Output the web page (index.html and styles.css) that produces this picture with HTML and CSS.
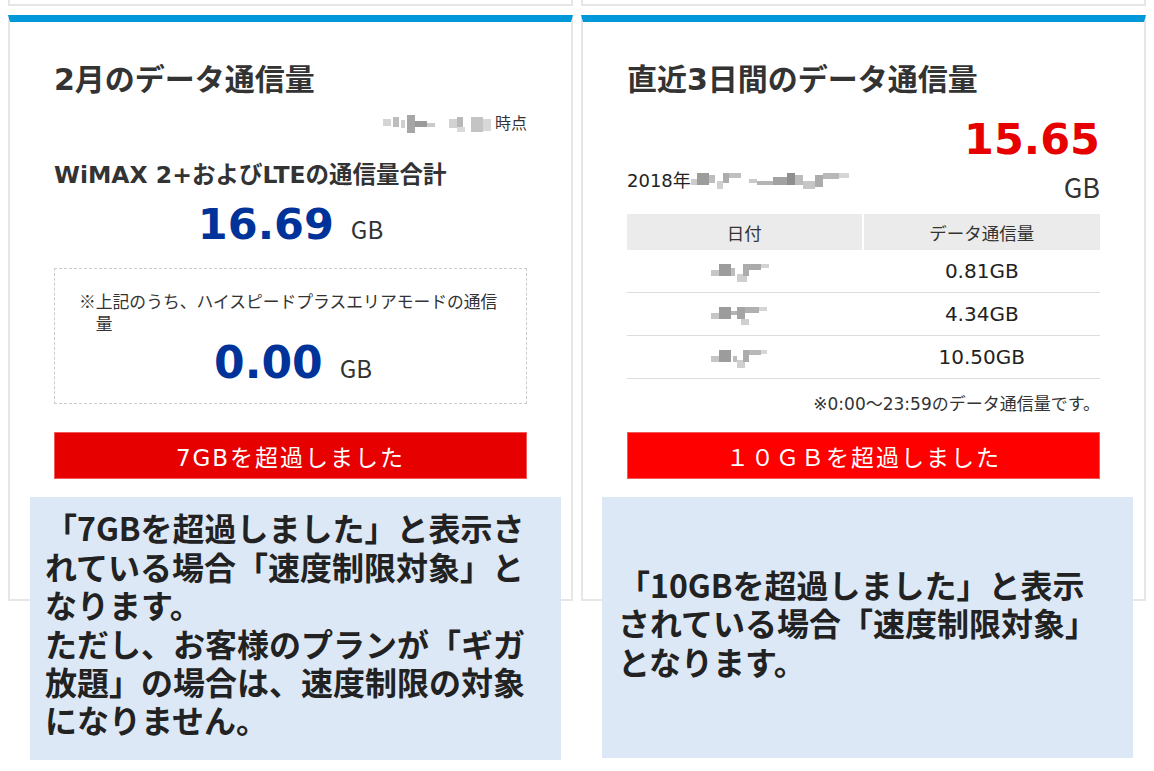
FILE: index.html
```html
<!DOCTYPE html>
<html lang="ja">
<head>
<meta charset="utf-8">
<title>データ通信量</title>
<link rel="stylesheet" href="styles.css">
</head>
<body>
<div class="columns">
  <section class="column">
    <div class="prev-card"></div>
    <div class="card">
      <h2 class="card-title">2月のデータ通信量</h2>
      <p class="as-of"><svg class="mosaic" width="112" height="18" viewBox="0 0 112 18" aria-hidden="true"><rect x="0" y="4" width="8" height="7" fill="#d4d4d4"/><rect x="10" y="2" width="6" height="10" fill="#bdbdbd"/><rect x="18" y="5" width="4" height="8" fill="#cfcfcf"/><rect x="24" y="0" width="8" height="18" fill="#a6a6a6"/><rect x="32" y="6" width="12" height="6" fill="#9a9a9a"/><rect x="44" y="8" width="8" height="4" fill="#cacaca"/><rect x="66" y="4" width="8" height="9" fill="#d2d2d2"/><rect x="74" y="2" width="6" height="10" fill="#b8b8b8"/><rect x="74" y="12" width="8" height="5" fill="#dadada"/><rect x="88" y="2" width="12" height="15" fill="#c4c4c4"/><rect x="100" y="4" width="8" height="12" fill="#d8d8d8"/></svg>時点</p>
      <h3 class="subtitle">WiMAX 2+およびLTEの通信量合計</h3>
      <p class="amount"><span class="num num-blue">16.69</span><span class="unit">GB</span></p>
      <div class="hs-box">
        <p class="hs-note"><span class="mark">※</span><span class="hs-text">上記のうち、ハイスピードプラスエリアモードの通信量</span></p>
        <p class="amount amount-inner"><span class="num num-blue">0.00</span><span class="unit">GB</span></p>
      </div>
      <div class="alert alert-dark">7GBを超過しました</div>
    </div>
    <div class="callout callout-left">
      <p>「7GBを超過しました」と表示されている場合「速度制限対象」となります。<br>ただし、お客様のプランが「ギガ放題」の場合は、速度制限の対象になりません。</p>
    </div>
  </section>

  <section class="column">
    <div class="prev-card"></div>
    <div class="card">
      <h2 class="card-title">直近3日間のデータ通信量</h2>
      <div class="summary">
        <p class="period">2018年<svg class="mosaic" width="170" height="20" viewBox="0 0 170 20" aria-hidden="true"><rect x="0" y="8" width="6" height="6" fill="#cccccc"/><rect x="6" y="2" width="12" height="12" fill="#9c9c9c"/><rect x="18" y="4" width="6" height="8" fill="#bdbdbd"/><rect x="26" y="10" width="6" height="8" fill="#cfcfcf"/><rect x="32" y="2" width="6" height="10" fill="#acacac"/><rect x="38" y="2" width="12" height="5" fill="#c0c0c0"/><rect x="58" y="8" width="8" height="4" fill="#cacaca"/><rect x="66" y="10" width="16" height="4" fill="#b4b4b4"/><rect x="82" y="6" width="14" height="8" fill="#a2a2a2"/><rect x="96" y="2" width="8" height="12" fill="#8e8e8e"/><rect x="104" y="4" width="8" height="10" fill="#bcbcbc"/><rect x="112" y="10" width="12" height="8" fill="#c6c6c6"/><rect x="124" y="4" width="8" height="12" fill="#acacac"/><rect x="132" y="2" width="16" height="6" fill="#b8b8b8"/><rect x="148" y="2" width="10" height="5" fill="#d6d6d6"/></svg></p>
        <div class="total">
          <span class="num num-red">15.65</span>
          <span class="total-unit">GB</span>
        </div>
      </div>
      <table class="usage-table">
        <thead>
          <tr><th>日付</th><th>データ通信量</th></tr>
        </thead>
        <tbody>
          <tr><td><svg class="mosaic" width="68" height="20" viewBox="0 0 68 20" aria-hidden="true"><rect x="0" y="8" width="8" height="6" fill="#c6c6c6"/><rect x="8" y="2" width="12" height="12" fill="#9c9c9c"/><rect x="20" y="6" width="4" height="8" fill="#bdbdbd"/><rect x="26" y="12" width="10" height="8" fill="#cfcfcf"/><rect x="32" y="2" width="6" height="12" fill="#acacac"/><rect x="38" y="2" width="12" height="6" fill="#aaaaaa"/><rect x="50" y="2" width="8" height="4" fill="#d2d2d2"/></svg></td><td>0.81GB</td></tr>
          <tr><td><svg class="mosaic" width="68" height="20" viewBox="0 0 68 20" aria-hidden="true"><rect x="0" y="8" width="8" height="6" fill="#c6c6c6"/><rect x="8" y="2" width="12" height="12" fill="#9c9c9c"/><rect x="20" y="6" width="6" height="4" fill="#b4b4b4"/><rect x="26" y="2" width="8" height="12" fill="#a4a4a4"/><rect x="34" y="2" width="14" height="6" fill="#b0b0b0"/><rect x="30" y="14" width="8" height="6" fill="#cfcfcf"/><rect x="48" y="2" width="8" height="4" fill="#d4d4d4"/></svg></td><td>4.34GB</td></tr>
          <tr><td><svg class="mosaic" width="68" height="20" viewBox="0 0 68 20" aria-hidden="true"><rect x="0" y="8" width="8" height="6" fill="#c6c6c6"/><rect x="8" y="2" width="12" height="12" fill="#9c9c9c"/><rect x="22" y="8" width="4" height="6" fill="#bdbdbd"/><rect x="26" y="12" width="8" height="8" fill="#cfcfcf"/><rect x="32" y="2" width="6" height="12" fill="#acacac"/><rect x="38" y="2" width="12" height="5" fill="#b8b8b8"/><rect x="50" y="2" width="6" height="4" fill="#d6d6d6"/></svg></td><td>10.50GB</td></tr>
        </tbody>
      </table>
      <p class="range-note">※0:00～23:59のデータ通信量です。</p>
      <div class="alert alert-bright">１０ＧＢを超過しました</div>
    </div>
    <div class="callout callout-right">
      <p>「10GBを超過しました」と表示されている場合「速度制限対象」となります。</p>
    </div>
  </section>
</div>
</body>
</html>
```

FILE: styles.css
```css
* {
  box-sizing: border-box;
}

body {
  margin: 0;
  background: #ffffff;
  font-family: "Noto Sans CJK JP", sans-serif;
  color: #333333;
}

.columns {
  display: flex;
  gap: 8px;
  padding: 0 8px;
}

.column {
  flex: 1;
  min-width: 0;
}

.prev-card {
  height: 6px;
  border: 2px solid #e6e6e6;
  border-top: 0;
}

.card {
  margin-top: 9px;
  border: 2px solid #e6e6e6;
  border-top: 7px solid #0098d9;
  padding: 0 44px 120px;
  font-family: "DejaVu Sans", "Noto Sans CJK JP", sans-serif;
}

.card-title {
  margin: 38px 0 0;
  height: 40px;
  font-size: 30px;
  line-height: 40px;
  font-weight: 700;
  color: #333333;
}

.as-of {
  margin: 12px 0 0;
  height: 24px;
  text-align: right;
  font-size: 16px;
  line-height: 24px;
}

.mosaic {
  vertical-align: -4px;
}

.subtitle {
  margin: 23px 0 0;
  height: 32px;
  font-size: 23.5px;
  line-height: 32px;
  font-weight: 700;
  color: #333333;
}

.amount {
  display: flex;
  justify-content: center;
  align-items: baseline;
  margin: 5px 0 0;
  height: 56px;
}

.num {
  font-family: "DejaVu Sans", sans-serif;
  font-weight: 700;
  font-size: 43px;
  line-height: 56px;
}

.amount-inner .num {
  font-size: 44px;
}

.num-blue {
  color: #003399;
}

.num-red {
  color: #e60000;
}

.unit {
  margin-left: 17px;
  font-family: "Noto Sans CJK JP", sans-serif;
  font-size: 24px;
  line-height: 56px;
  color: #333333;
}

.hs-box {
  margin-top: 16px;
  height: 136px;
  border: 1px dashed #cccccc;
  padding: 21px 19px 12px 24px;
}

.hs-note {
  display: flex;
  margin: 0;
  height: 44px;
  font-family: "Noto Sans CJK JP", sans-serif;
  font-size: 16.8px;
  line-height: 22px;
  color: #333333;
}

.mark {
  flex: none;
}

.amount-inner {
  margin-top: 1px;
}

.alert {
  margin-top: 28px;
  height: 47px;
  display: flex;
  align-items: center;
  justify-content: center;
  color: #ffffff;
  font-size: 23px;
  letter-spacing: 2px;
  border: 1px solid #f25a5a;
}

.alert-dark {
  background: #e60000;
}

.alert-bright {
  margin-top: 17px;
  background: #ff0000;
}

.summary {
  display: flex;
  justify-content: space-between;
  align-items: flex-end;
  margin-top: 14px;
  height: 92px;
}

.period {
  margin: 0;
  padding-bottom: 13px;
  font-size: 18px;
  line-height: 24px;
  color: #222222;
}

.total {
  display: flex;
  flex-direction: column;
  align-items: flex-end;
}

.total .num {
  line-height: 50px;
}

.total-unit {
  margin-top: 4px;
  font-family: "Noto Sans CJK JP", sans-serif;
  font-size: 27px;
  line-height: 38px;
  color: #333333;
}

.usage-table {
  width: 100%;
  margin-top: 8px;
  border-collapse: separate;
  border-spacing: 0;
  table-layout: fixed;
}

.usage-table th {
  height: 36px;
  padding: 0;
  background: #ebebeb;
  font-family: "Noto Sans CJK JP", sans-serif;
  font-weight: 400;
  font-size: 17.5px;
  color: #333333;
}

.usage-table th:first-child {
  border-right: 2px solid #ffffff;
}

.usage-table td {
  padding: 0;
  height: 43px;
  border-bottom: 1px solid #dddddd;
  text-align: center;
  vertical-align: middle;
  font-size: 20px;
  color: #222222;
}

.range-note {
  margin: 14px 0 0;
  height: 22px;
  text-align: right;
  font-size: 17px;
  line-height: 22px;
  color: #333333;
}

.callout {
  position: relative;
  margin-top: -104px;
  width: 531px;
  display: flex;
  align-items: center;
  background: #dce8f5;
  color: #222222;
  font-size: 32px;
  line-height: 38.4px;
  font-weight: 700;
}

.callout p {
  margin: 0;
}

.callout-left {
  margin-left: 22px;
  height: 263px;
  padding: 0 7px 10px 15px;
}

.callout-right {
  margin-left: 21px;
  height: 261px;
  padding: 0 29px 10px 16px;
}
```
